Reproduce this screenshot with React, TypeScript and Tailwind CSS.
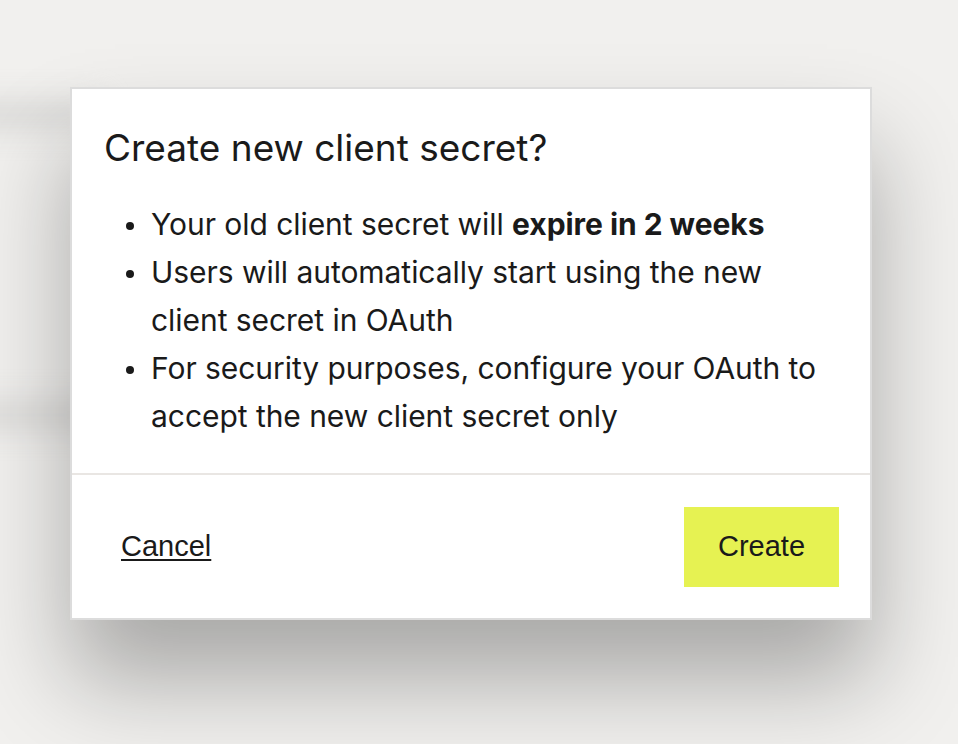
export default function App() {
  const items = [
    <>Your old client secret will <span className="font-bold">expire in 2 weeks</span></>,
    <>Users will automatically start using the new client secret in OAuth</>,
    <>For security purposes, configure your OAuth to accept the new client secret only</>,
  ];
  return (
    <div className="relative w-[958px] h-[744px] overflow-hidden bg-[#f1f0ee]" style={{ fontFamily: "Inter, 'Noto Sans', sans-serif" }}>
      <div className="absolute left-[-40px] top-[100px] w-[140px] h-[30px] bg-[#dcdbd9] blur-[14px]" />
      <div className="absolute left-[-40px] top-[400px] w-[140px] h-[30px] bg-[#dedddb] blur-[14px]" />
      <div className="relative pl-[70px] pt-[87px]">
        <div className="w-[802px] bg-white border-2 border-[#dcdcdc] shadow-[0_60px_90px_rgba(0,0,0,0.3)] text-[#1a1a1a]">
          <div className="pl-[32px] pr-[44px] pt-[37px] pb-[33px]">
            <h2 className="text-[37px] leading-[44px] font-normal">Create new client secret?</h2>
            <ul className="mt-[30px] text-[30px] leading-[48px] tracking-[-0.05px]">
              {items.map((it, i) => (
                <li key={i} className="flex">
                  <span className="w-[47px] shrink-0 flex justify-end pr-[17px] pt-[22px]">
                    <span className="block w-[8px] h-[8px] rounded-full bg-[#1a1a1a]" />
                  </span>
                  <span>{it}</span>
                </li>
              ))}
            </ul>
          </div>
          <div className="border-t-2 border-[#e9e6e3] flex items-center justify-between pl-[49px] pr-[31px] pt-[32px] pb-[31px]" style={{ fontFamily: "'Liberation Sans', Arial, sans-serif" }}>
            <button className="text-[29px] underline underline-offset-[3px] decoration-2 text-[#1a1a1a]">Cancel</button>
            <button className="w-[155px] h-[80px] bg-[#e6f252] text-[29px] text-[#1a1a1a]">Create</button>
          </div>
        </div>
      </div>
    </div>
  );
}
